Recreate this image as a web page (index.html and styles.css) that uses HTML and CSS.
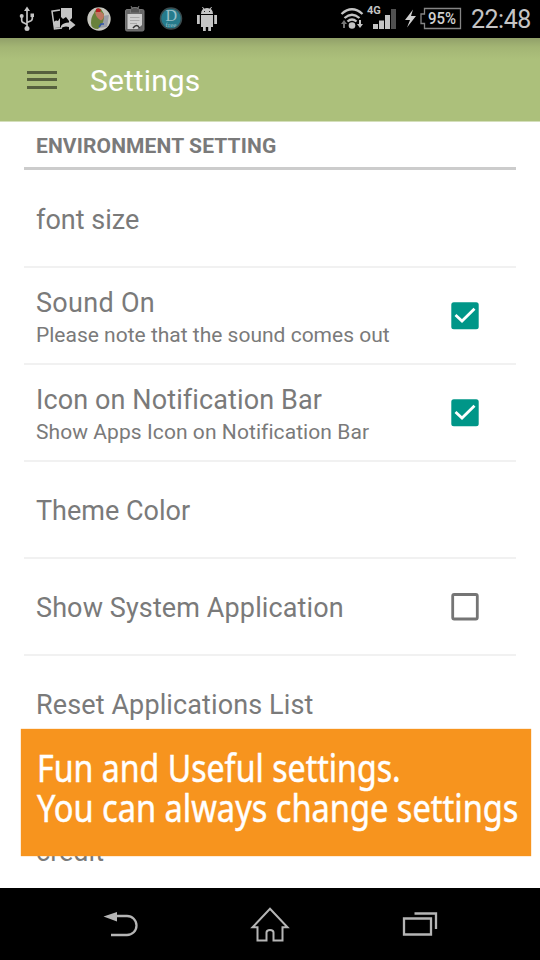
FILE: index.html
```html
<!DOCTYPE html>
<html lang="en">
<head>
<meta charset="utf-8">
<title>Settings</title>
<link rel="stylesheet" href="styles.css">
</head>
<body>
<div class="screen">
  <header class="status">
    <svg class="status-icons" width="230" height="38" viewBox="0 0 230 38">
      <g fill="none" stroke="#c4c4c4" stroke-width="1.7">
        <path d="M27 10V28M21.700 17V20.500Q21.700 22 23.200 22.600L27 24.500M32.300 16V18.500Q32.300 20 31 20.700L27 22.500"/>
      </g>
      <path fill="#c4c4c4" d="M27 6.500L30 11H24zM30.500 13.500H34V17H30.500z"/>
      <circle cx="21.700" cy="16" r="2" fill="#c4c4c4"/><circle cx="27" cy="28.500" r="2.500" fill="#c4c4c4"/>
      <path d="M60 10L52 11.200L54.500 29L62 28" fill="none" stroke="#c4c4c4" stroke-width="1.500"/>
      <path d="M53.500 23Q55 19.500 58 21L60 18V27.500L54.500 28zM61 8H72V18L69 21L66 17L63 19L61 17z" fill="#c4c4c4"/>
      <path d="M61 26Q63 22.500 69 22.500V19.500L75.500 25L69 30V27Q65 25.500 61 28z" fill="#c4c4c4"/>
      <circle cx="99" cy="19" r="11.700" fill="#c5c5be"/>
      <path d="M102 16L109 15L107 27L98 28z" fill="#9a9ea8"/>
      <path d="M94 13Q96 7 101 9L104 14Q105 23 98 29Q91 29 91 23Q91 17 94 13z" fill="#68813b"/>
      <path d="M95 12Q102 10 104 15Q104 19 101 20.500Q96 18 95 12z" fill="#bf7762"/>
      <path d="M96 9Q99 7 101 10L100 12H96z" fill="#b81f21"/>
      <path d="M99 27L101 24L104 24" fill="none" stroke="#3156a8" stroke-width="1.500"/>
      <rect x="125.500" y="9.500" width="18.500" height="21.500" rx="1.500" fill="#686868" stroke="#777"/>
      <path d="M127.500 14H142V25L137.500 29H127.500z" fill="#d0d0d0"/>
      <path d="M130.500 10Q130.500 7.500 135 7.500T139.500 10V13H130.500zM131 6L132.500 9M139 6L137.500 9" fill="#555" stroke="#777"/>
      <path d="M130 17.500H139.500M130 20.500H139.500M130 23.500H137" stroke="#aaa"/>
      <path d="M133 28Q137 23 139.500 28" fill="none" stroke="#333" stroke-width="1.500"/>
      <circle cx="171" cy="18.500" r="10.500" fill="#267b8c" stroke="#3b4b4e" stroke-width="1.500"/>
      <text x="171.300" y="20.500" class="badge-letter">D</text>
      <text x="171" y="26.500" class="badge-word">free</text>
      <path d="M201 14Q201 8 207 8T213 14zM201 15H213V27H211V31H208.200V27H205.800V31H203V27H201zM197 15H199.800V24H197zM214.200 15H217V24H214.200z" fill="#c4c4c4"/>
      <path d="M202.500 7L204 9.500M211.500 7L210 9.500" stroke="#c4c4c4"/>
      <path d="M204 11.500H205M209 11.500H210" stroke="#222" stroke-width="1.200"/>
    </svg>
    <svg class="status-icons" width="134" height="38" viewBox="330 0 134 38">
      <g fill="none" stroke="#c4c4c4" stroke-width="2.300"><path d="M341.500 14Q352 4.500 362.500 14M344.500 18Q352 11.500 359.500 18M347.500 21.500Q352 17.500 356.500 21.500"/></g>
      <circle cx="352" cy="25.500" r="3.300" fill="#c4c4c4"/>
      <path d="M344 20L347 24H345V28H343V24H341z" fill="#777"/>
      <path d="M359 20H361V24H363L360 28L357 24H359z" fill="#c4c4c4"/>
      <text x="367" y="13.500" class="network">4G</text>
      <path d="M373 24H378V29H373zM379 20.500H384V29H379zM385 15H390V29H385z" fill="#c4c4c4"/>
      <path d="M391 9H396V29H391z" fill="#505050"/>
      <path d="M413 9.500L405 20H410L407 27.500L416 16H411z" fill="#d0d0d0"/>
      <path d="M424.500 8.500H460.500V28.500H424.500V23.500H421V14H424.500z" fill="none" stroke="#858585" stroke-width="1.300"/>
      <text x="428" y="24.400" class="battery" textLength="28" lengthAdjust="spacingAndGlyphs">95%</text>
    </svg>
    <span class="clock">22:48</span>
  </header>
  <div class="appbar">
    <div class="menu"><i></i><i></i><i></i></div>
    <h1>Settings</h1>
  </div>
  <main>
    <h2><span>ENVIRONMENT SETTING</span></h2>
    <ul>
      <li><p class="title">font size</p></li>
      <li><div><p class="title t-sound">Sound On</p><p class="sub">Please note that the sound comes out</p></div>
        <svg class="check" viewBox="0 0 28 28"><rect x=".3" y=".3" width="27.400" height="27" rx="2.500" fill="#009688"/><path d="M4.500 13L11 19L23.500 6.700" fill="none" stroke="#fff" stroke-width="2.800"/></svg></li>
      <li><div><p class="title t-wide">Icon on Notification Bar</p><p class="sub s-icon">Show Apps Icon on Notification Bar</p></div>
        <svg class="check" viewBox="0 0 28 28"><rect x=".3" y=".3" width="27.400" height="27" rx="2.500" fill="#009688"/><path d="M4.500 13L11 19L23.500 6.700" fill="none" stroke="#fff" stroke-width="2.800"/></svg></li>
      <li><p class="title">Theme Color</p></li>
      <li><p class="title t-wide">Show System Application</p>
        <svg class="check" viewBox="0 0 28 28"><rect x="1.700" y="1.500" width="24.600" height="24.500" rx="1.500" fill="none" stroke="#757575" stroke-width="2.800"/></svg></li>
      <li><p class="title t-wide">Reset Applications List</p></li>
      <li class="last"><p class="title">credit</p></li>
    </ul>
  </main>
  <nav>
    <svg width="380" height="72" viewBox="80 888 380 72" fill="none" stroke="#b5b5b5" stroke-width="2.300">
      <path d="M116 916H127A9.400 9.400 0 0 1 127 935H111"/>
      <path d="M103.500 916.500L117 912V921.500z" fill="#b5b5b5" stroke="none"/>
      <path d="M270 908.800L287.500 927.300H282.500V940.500H273.500V932.500Q273.500 930 270 930T266.500 932.500V940.500H257.500V927.300H252.500z" stroke-width="2"/>
      <path d="M404 918.500H431V934.500H404zM414.500 913.500H436V929"/>
    </svg>
  </nav>
  <aside class="banner"><p class="line-one">Fun and Useful settings.</p><p class="line-two">You can always change settings</p></aside>
</div>
</body>
</html>
```
FILE: styles.css
```css
* { box-sizing: border-box; margin: 0; padding: 0; }
body { font-family: Roboto, "Liberation Sans", sans-serif; background: #fff; }
.screen { position: relative; width: 540px; height: 960px; overflow: hidden; display: flex; flex-direction: column; }
.status { height: 38px; background: #000; display: flex; flex: none; }
.status-icons { flex: none; }
.status-icons:first-child { margin-right: 100px; }
.clock { font-size: 25px; line-height: 40px; color: #c4c4c4; margin-left: 7px; letter-spacing: -.5px; white-space: nowrap; }
.badge-letter { font: 16px "Liberation Serif", serif; fill: #9bc0c8; text-anchor: middle; }
.badge-word { font: 7px "Liberation Serif", serif; fill: #9bc0c8; text-anchor: middle; }
.network { font: bold 11px Roboto, sans-serif; fill: #c4c4c4; }
.battery { font: 500 16px Roboto, sans-serif; fill: #d0d0d0; }
.appbar { height: 84px; flex: none; display: flex; align-items: center; padding-left: 27px; background: linear-gradient(#91a069 0, #a3b574 9px, #acc07b 21px); border-bottom: 1px solid #d4dfbb; }
.menu { display: flex; flex-direction: column; gap: 4.500px; width: 30px; margin-right: 33px; }
.menu i { height: 3px; background: #56603e; }
h1 { font-size: 30px; line-height: 36px; font-weight: 400; color: #fff; letter-spacing: .1px; padding-top: 2px; }
main { height: 766px; flex: none; padding: 0 24px; overflow: hidden; }
h2 { height: 48px; font-size: 21px; line-height: 49px; font-weight: 700; color: #7a7a7a; letter-spacing: .12px; padding-left: 12px; border-bottom: 3px solid #ccc; margin-bottom: 1px; }
ul { list-style: none; }
li { height: 97px; display: flex; align-items: center; justify-content: space-between; padding: 2px 37px 0 12px; border-bottom: 2px solid #f1f1f1; }
li.last { padding-top: 62px; height: 135px; border: 0; }
.title { font-size: 27px; line-height: 36px; color: #7a7a7a; white-space: nowrap; }
.t-sound { letter-spacing: .3px; }
.t-wide { letter-spacing: .11px; }
.sub { font-size: 21px; line-height: 28px; color: #7a7a7a; white-space: nowrap; }
.s-icon { letter-spacing: .07px; }
.check { width: 28px; height: 28px; flex: none; margin-bottom: 2px; }
nav { height: 72px; flex: none; background: #000; padding-left: 80px; }
nav svg { display: block; }
.banner { position: absolute; left: 21px; top: 729px; width: 510px; height: 127px; background: #f7941e; color: #fff; padding: 18px 0 0 16px; font: 38px/40px "Noto Sans", sans-serif; -webkit-text-stroke: .5px #fff; box-shadow: 0 0 1px #f7941e; }
.banner p { white-space: nowrap; width: max-content; transform-origin: 0 0; }
.line-one { transform: scaleX(.845); }
.line-two { transform: scaleX(.857); }
```
